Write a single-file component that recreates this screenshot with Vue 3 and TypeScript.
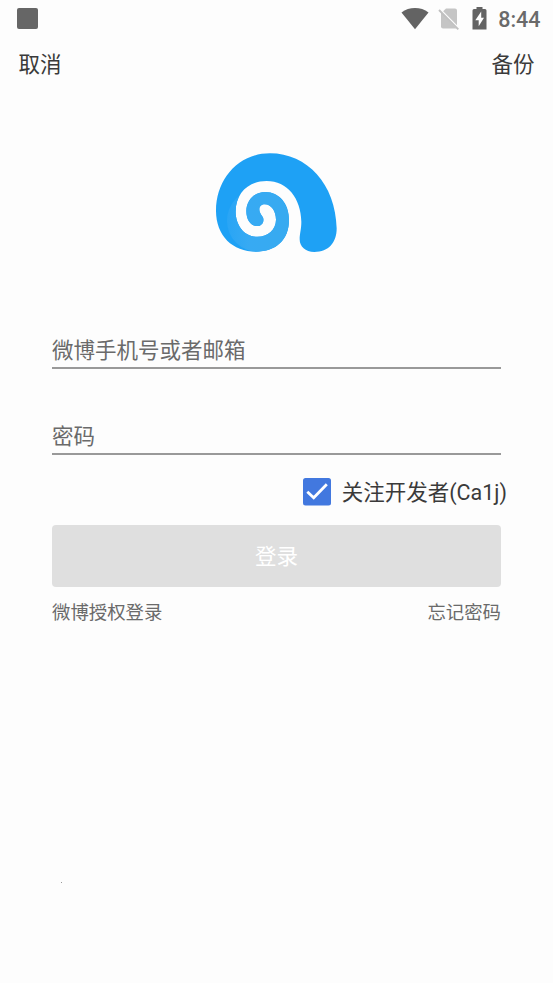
<script setup lang="ts">
import { ref } from 'vue'

const account = ref('')
const password = ref('')
const follow = ref(true)
const shell =
  'M343 336C386 336 410 308 410 265C407 133 322 40 210 40C113 40 48 120 48 212C48 287 98 335 168 335C228 335 267 300 267 240C267 190 238 156 196 156C162 156 139 182 139 213C139 240 152 258 172 258C184 258 192 248 190 236C189 228 178 222 178 208C178 198 186 193 194 193C214 193 228 214 228 239C228 268 204 290 172 290C132 290 107 255 107 215C107 160 145 123 200 123C262 123 303 175 304 245C304 268 299 280 299 298C299 320 316 336 343 336Z'
</script>

<template>
  <main class="screen">
    <header class="status">
      <span class="square"></span>
      <div class="indicators">
        <svg class="wifi" width="28" height="22" viewBox="0 0 28 22">
          <path d="M.5 4.5C8-1.4 20-1.4 27.5 4.5L14 21.2Z" fill="#636363" />
        </svg>
        <svg class="sim" width="22" height="22" viewBox="0 0 22 22">
          <path d="M8 .5H17Q19 .5 19 2.5V17.3L5.2 3.3Z" fill="#c5c5c5" />
          <path d="M3 4V18.5Q3 20.5 5 20.5H18.5Z" fill="#c5c5c5" />
          <path d="M1 2L20.3 21.3" stroke="#c0c0c0" stroke-width="1.9" />
        </svg>
        <svg class="battery" width="15" height="23" viewBox="0 0 15 23">
          <path d="M4.5 0H10.5V2H13Q14.5 2 14.5 3.5V22.5H.5V3.5Q.5 2 2 2H4.5Z" fill="#636363" />
          <path d="M9.2 4.5L3.3 13.3H6.7V19.3L12 10.8H9.2Z" fill="#fdfdfd" />
        </svg>
        <span class="time">8:44</span>
      </div>
    </header>
    <nav class="actions"><span>取消</span><span>备份</span></nav>
    <svg class="logo" width="150" height="125" viewBox="0 0 450 375">
      <defs>
        <clipPath id="shell"><path :d="shell" /></clipPath>
        <linearGradient id="glow" x1="0" y1="0" x2="1" y2="0">
          <stop offset="0" stop-color="#29a5f5" />
          <stop offset=".35" stop-color="#37aaf3" />
          <stop offset="1" stop-color="#37aaf0" />
        </linearGradient>
      </defs>
      <path :d="shell" fill="#1ea1f5" />
      <circle cx="175" cy="242" r="94" fill="url(#glow)" clip-path="url(#shell)" />
    </svg>
    <form class="form" @submit.prevent>
      <input v-model="account" class="field" type="text" placeholder="微博手机号或者邮箱" />
      <input v-model="password" class="field second" type="password" placeholder="密码" />
      <label class="follow">
        <input v-model="follow" class="native" type="checkbox" />
        <svg width="28" height="28" viewBox="0 0 28 28">
          <rect width="28" height="27.5" rx="2.5" :fill="follow ? '#4278df' : '#aaa'" />
          <path v-if="follow" d="M4.3 13.8L10.7 19.8L23.8 6.3" fill="none" stroke="#fff" stroke-width="2.8" />
        </svg>
        <span>关注开发者(Ca1j)</span>
      </label>
      <button class="login" type="submit">登录</button>
      <div class="links"><span>微博授权登录</span><span>忘记密码</span></div>
    </form>
    <i class="speck"></i>
  </main>
</template>

<style>
body { background: #fdfdfd; }
</style>

<style scoped>
.screen {
  box-sizing: border-box;
  width: 553px;
  height: 983px;
  overflow: hidden;
  background: #fdfdfd;
  font-family: Roboto, "Noto Sans CJK SC", sans-serif;
  color: #3a3a3a;
  display: flex;
  flex-direction: column;
}
.status {
  height: 37px;
  flex: none;
  display: flex;
  justify-content: space-between;
  align-items: center;
  padding: 0 12.5px 0 17px;
}
.square { width: 21px; height: 21px; border-radius: 2px; background: #666; }
.indicators { display: flex; align-items: center; }
.sim { margin-left: 9px; }
.battery { margin-left: 12px; }
.time { margin-left: 11px; padding-top: 2px; font-size: 21.5px; font-weight: 500; line-height: 24px; color: #6a6a6a; }
.actions {
  height: 53px;
  flex: none;
  display: flex;
  justify-content: space-between;
  align-items: center;
  padding: 0 18.5px 2px;
  box-sizing: border-box;
  font-size: 21.5px;
}
.logo { display: block; flex: none; margin: 50px 0 0 200px; }
.form { display: flex; flex-direction: column; margin: 67px 52px 0; }
.field {
  box-sizing: border-box;
  width: 100%;
  height: 37px;
  padding: 1px 0 0;
  border: 0;
  border-bottom: 2px solid #999;
  border-radius: 0;
  outline: 0;
  background: transparent;
  color: #333;
  font: 21.5px/34px Roboto, "Noto Sans CJK SC", sans-serif;
}
.field::placeholder { color: #6a6a6a; opacity: 1; }
.second { margin-top: 49px; }
.follow {
  display: flex;
  align-items: center;
  align-self: flex-end;
  height: 32px;
  margin: 21px -6px 0 0;
  font-size: 21.5px;
  line-height: 32px;
  white-space: nowrap;
}
.follow svg { margin-right: 11px; }
.follow span { padding-top: 2px; }
.native { display: none; }
.login {
  height: 62px;
  margin: 17px 0 0;
  padding: 2px 0 0;
  border: 0;
  border-radius: 4px;
  background: #dfdfdf;
  color: #fff;
  font: 21.5px/60px Roboto, "Noto Sans CJK SC", sans-serif;
}
.links {
  display: flex;
  justify-content: space-between;
  margin-top: 11px;
  font-size: 18.4px;
  line-height: 30px;
  color: #6a6a6a;
}
.speck { width: 1px; height: 1px; margin: 254px 0 0 61px; background: #999; }
</style>
